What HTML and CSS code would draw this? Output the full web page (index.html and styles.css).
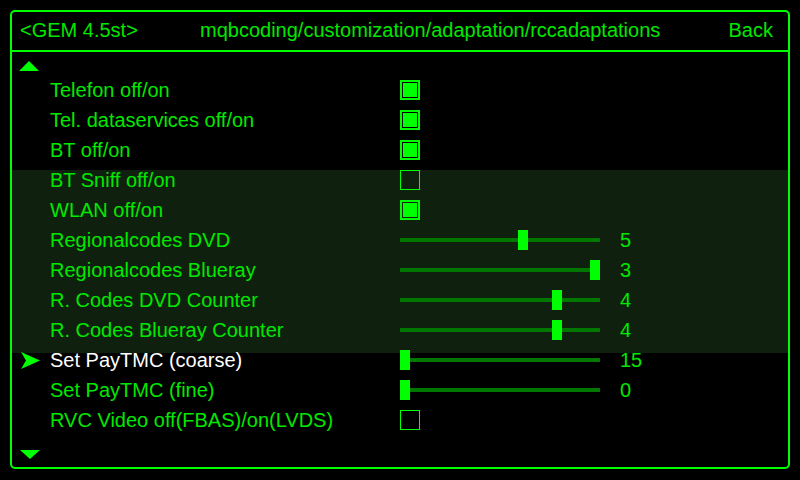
FILE: index.html
```html
<!DOCTYPE html>
<html>
<head>
<meta charset="utf-8">
<link rel="stylesheet" href="styles.css">
</head>
<body>
<div class="frame">
  <div class="header">
    <span class="h-gem">&lt;GEM 4.5st&gt;</span>
    <span class="h-path">mqbcoding/customization/adaptation/rccadaptations</span>
    <span class="h-back">Back</span>
  </div>
  <div class="body">
    <div class="arrow-up"></div>
    <div class="rows">
      <div class="row"><span class="mark"></span><span class="label">Telefon off/on</span><span class="ctl"><span class="cb on"><span class="fill"></span></span></span><span class="val"></span></div>
      <div class="row"><span class="mark"></span><span class="label">Tel. dataservices off/on</span><span class="ctl"><span class="cb on"><span class="fill"></span></span></span><span class="val"></span></div>
      <div class="row"><span class="mark"></span><span class="label">BT off/on</span><span class="ctl"><span class="cb on"><span class="fill"></span></span></span><span class="val"></span></div>
      <div class="row"><span class="mark"></span><span class="label">BT Sniff off/on</span><span class="ctl"><span class="cb"></span></span><span class="val"></span></div>
      <div class="row"><span class="mark"></span><span class="label">WLAN off/on</span><span class="ctl"><span class="cb on"><span class="fill"></span></span></span><span class="val"></span></div>
      <div class="row"><span class="mark"></span><span class="label">Regionalcodes DVD</span><span class="ctl"><span class="slider"><span class="thumb" style="left:118px"></span></span></span><span class="val">5</span></div>
      <div class="row"><span class="mark"></span><span class="label">Regionalcodes Blueray</span><span class="ctl"><span class="slider"><span class="thumb" style="left:190px"></span></span></span><span class="val">3</span></div>
      <div class="row"><span class="mark"></span><span class="label">R. Codes DVD Counter</span><span class="ctl"><span class="slider"><span class="thumb" style="left:152px"></span></span></span><span class="val">4</span></div>
      <div class="row"><span class="mark"></span><span class="label">R. Codes Blueray Counter</span><span class="ctl"><span class="slider"><span class="thumb" style="left:152px"></span></span></span><span class="val">4</span></div>
      <div class="row selected"><span class="mark"><svg class="pointer" width="19" height="17" viewBox="0 0 19 17"><polygon points="0,0 19,8.5 0,17 5,8.5" fill="#00ff00"/></svg></span><span class="label">Set PayTMC (coarse)</span><span class="ctl"><span class="slider"><span class="thumb" style="left:0px"></span></span></span><span class="val">15</span></div>
      <div class="row"><span class="mark"></span><span class="label">Set PayTMC (fine)</span><span class="ctl"><span class="slider"><span class="thumb" style="left:0px"></span></span></span><span class="val">0</span></div>
      <div class="row"><span class="mark"></span><span class="label">RVC Video off(FBAS)/on(LVDS)</span><span class="ctl"><span class="cb"></span></span><span class="val"></span></div>
    </div>
    <div class="arrow-down"></div>
  </div>
</div>
</body>
</html>
```

FILE: styles.css
```css
html, body {
  margin: 0;
  padding: 0;
  background: #000;
}
body {
  width: 800px;
  height: 480px;
  overflow: hidden;
  font-family: "Liberation Sans", Arial, sans-serif;
  font-size: 20px;
  color: #00e800;
}
.frame {
  box-sizing: border-box;
  margin: 10px;
  width: 780px;
  height: 459px;
  border: 2px solid #00ff00;
  border-radius: 5px;
  display: flex;
  flex-direction: column;
}
.header {
  box-sizing: border-box;
  height: 40px;
  border-bottom: 2px solid #00ff00;
  display: flex;
  align-items: center;
  padding: 0 15px 1px 8px;
  white-space: nowrap;
}
.h-gem {
  width: 180px;
}
.h-path {
  flex: 1;
}
.body {
  flex: 1;
  display: flex;
  flex-direction: column;
  background: linear-gradient(to bottom,
    transparent 0, transparent 118px,
    #0f200f 118px, #0f200f 301px,
    transparent 301px);
}
.arrow-up {
  width: 0;
  height: 0;
  margin: 9px 0 4px 7px;
  border-left: 10px solid transparent;
  border-right: 10px solid transparent;
  border-bottom: 10px solid #00ff00;
}
.arrow-down {
  width: 0;
  height: 0;
  margin: 15px 0 0 8px;
  border-left: 10px solid transparent;
  border-right: 10px solid transparent;
  border-top: 9px solid #00ff00;
}
.rows {
  display: flex;
  flex-direction: column;
}
.row {
  display: grid;
  grid-template-columns: 38px 350px 220px auto;
  height: 30px;
  align-items: center;
  line-height: 30px;
  white-space: nowrap;
}
.row.selected .label {
  color: #ffffff;
}
.mark {
  display: flex;
  align-items: center;
  height: 30px;
  padding-left: 9px;
}
.pointer {
  display: block;
}
.ctl {
  display: flex;
  align-items: center;
  height: 30px;
}
.cb {
  box-sizing: border-box;
  width: 20px;
  height: 20px;
  border: 1px solid #00ff00;
  display: flex;
  align-items: center;
  justify-content: center;
}
.cb.on {
  border-width: 2px;
}
.fill {
  width: 14px;
  height: 14px;
  background: #00ff00;
}
.slider {
  position: relative;
  width: 200px;
  height: 4px;
  background: #007800;
}
.thumb {
  position: absolute;
  top: -8px;
  width: 10px;
  height: 20px;
  background: #00ff00;
}
.val {
  color: #00e800;
}
```
